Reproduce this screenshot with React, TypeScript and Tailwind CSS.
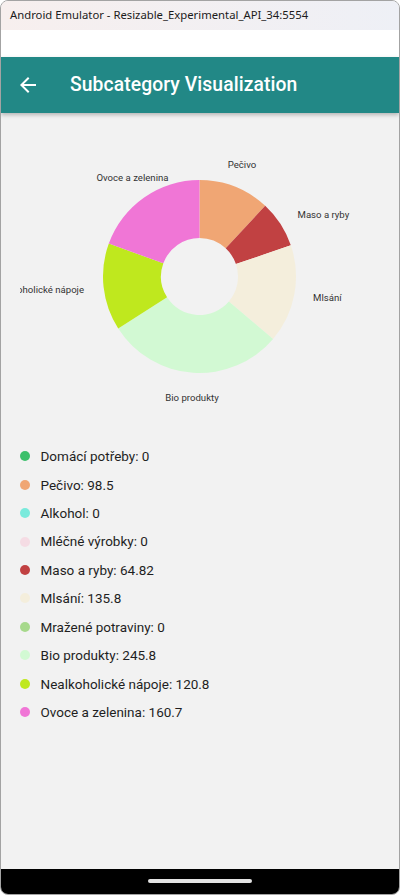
import React from 'react';

const items = [
    { name: 'Domácí potřeby', value: 0, color: '#3cc06b' },
    { name: 'Pečivo', value: 98.5, color: '#f0a674' },
    { name: 'Alkohol', value: 0, color: '#7aeadc' },
    { name: 'Mléčné výrobky', value: 0, color: '#f5dce4' },
    { name: 'Maso a ryby', value: 64.82, color: '#c14142' },
    { name: 'Mlsání', value: 135.8, color: '#f4eedc' },
    { name: 'Mražené potraviny', value: 0, color: '#a7d98c' },
    { name: 'Bio produkty', value: 245.8, color: '#d2f9d3' },
    { name: 'Nealkoholické nápoje', value: 120.8, color: '#bfe81e' },
    { name: 'Ovoce a zelenina', value: 160.7, color: '#f076d6' },
];

// chart label spots, measured off the device render
const labels: { text: string; x: number; y: number; anchor: 'start' | 'middle' | 'end' }[] = [
    { text: 'Pečivo', x: 242, y: 54.5, anchor: 'middle' },
    { text: 'Maso a ryby', x: 297.5, y: 104.5, anchor: 'start' },
    { text: 'Mlsání', x: 313, y: 188, anchor: 'start' },
    { text: 'Bio produkty', x: 192, y: 288, anchor: 'middle' },
    { text: 'Nealkoholické nápoje', x: 84, y: 180, anchor: 'end' },
    { text: 'Ovoce a zelenina', x: 168.5, y: 68, anchor: 'end' },
];

const CX = 199.5;
const CY = 163.5;
const R = 96.5;
const RI = 38.5;

function pt(r: number, deg: number) {
    const a = ((deg - 90) * Math.PI) / 180;
    return [CX + r * Math.cos(a), CY + r * Math.sin(a)];
}

function slicePath(a0: number, a1: number) {
    const large = a1 - a0 > 180 ? 1 : 0;
    const [x0, y0] = pt(R, a0);
    const [x1, y1] = pt(R, a1);
    const [x2, y2] = pt(RI, a1);
    const [x3, y3] = pt(RI, a0);
    return `M${x0} ${y0} A${R} ${R} 0 ${large} 1 ${x1} ${y1} L${x2} ${y2} A${RI} ${RI} 0 ${large} 0 ${x3} ${y3} Z`;
}

function DonutChart() {
    const total = items.reduce((s, i) => s + i.value, 0);
    let acc = 0;
    const slices = items
        .filter((i) => i.value > 0)
        .map((i) => {
            const a0 = (acc / total) * 360;
            acc += i.value;
            const a1 = (acc / total) * 360;
            return { ...i, d: slicePath(a0, a1) };
        });

    // the chart canvas starts 20px in, so long labels on the left get clipped (same as device)
    return (
        <svg width="379" height="329" viewBox="20 0 379 329" className="block shrink-0 ml-[19px]">
            {slices.map((s) => (
                <path key={s.name} d={s.d} fill={s.color} />
            ))}
            {labels.map((l) => (
                <text
                    key={l.text}
                    x={l.x}
                    y={l.y}
                    textAnchor={l.anchor}
                    fontSize="9.6"
                    fill="#333333"
                    fontFamily="Roboto, sans-serif"
                >
                    {l.text}
                </text>
            ))}
        </svg>
    );
}

export default function App() {
    return (
        <div
            className="w-[400px] h-[895px] flex flex-col border border-[#a3a3a3] rounded-t-[8px] rounded-b-[8px] overflow-hidden bg-[#f2f2f2]"
            style={{ fontFamily: 'Roboto, sans-serif' }}
        >
            {/* Emulator window title */}
            <div className="h-[29px] shrink-0 flex items-center pl-[9px] bg-gradient-to-r from-[#f7efee] to-[#eef0f6]">
                <span className="text-[11.3px] text-[#1b1b1b] font-['Noto_Sans',sans-serif]">
                    Android Emulator - Resizable_Experimental_API_34:5554
                </span>
            </div>

            {/* Status bar */}
            <div className="h-[27px] shrink-0 bg-white" />

            {/* App bar */}
            <div className="h-[56px] shrink-0 flex items-center bg-[#228886] shadow-[0_2px_4px_rgba(0,0,0,0.25)] relative z-10">
                <svg width="24" height="24" viewBox="0 0 24 24" className="ml-[15px]">
                    <path d="M20 11H7.83l5.59-5.59L12 4l-8 8 8 8 1.41-1.41L7.83 13H20v-2z" fill="#ffffff" />
                </svg>
                <span className="ml-[30px] text-white text-[19.3px] font-medium tracking-[0.1px]">
                    Subcategory Visualization
                </span>
            </div>

            {/* Content */}
            <div className="flex-1 flex flex-col bg-[#f2f2f2]">
                <DonutChart />
                <div className="flex flex-col pl-[19px]">
                    {items.map((i) => (
                        <div key={i.name} className="h-[28.44px] flex items-center gap-[10.5px]">
                            <span className="w-[10px] h-[10px] rounded-full" style={{ backgroundColor: i.color }} />
                            <span className="text-[13.5px] text-[#1f1f1f]">
                                {i.name}: {i.value}
                            </span>
                        </div>
                    ))}
                </div>
            </div>

            {/* Nav bar */}
            <div className="h-[25px] shrink-0 bg-black flex items-center justify-center">
                <div className="w-[104px] h-[4px] rounded-full bg-[#e2e2e2] -mt-[2px]" />
            </div>
        </div>
    );
}
